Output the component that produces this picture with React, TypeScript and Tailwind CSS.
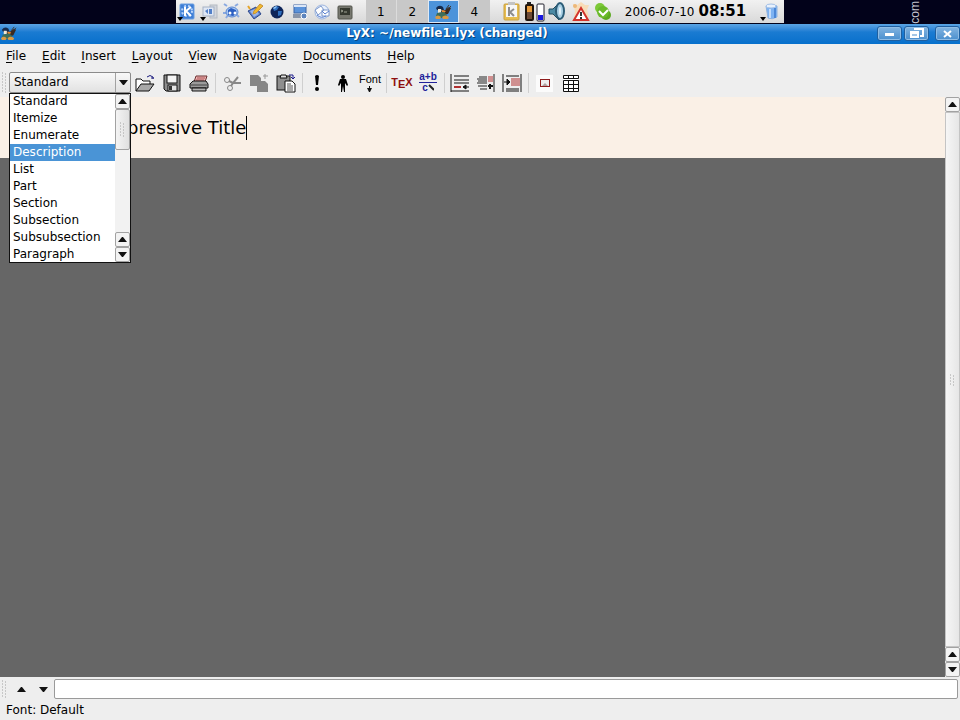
import React from "react";

type Kids = { children: React.ReactNode };

function Icon({ children, w = 20, h = 20 }: Kids & { w?: number; h?: number }) {
  return (
    <svg width={w} height={h} viewBox={`0 0 ${w} ${h}`} fill="none" aria-hidden="true" className="shrink-0">
      {children}
    </svg>
  );
}

const Gear = () => (
  <>
    <path d="M2 2l3 2M16 2l-3 2M1 11l3 0M17 15l-3-3M4 16l2-3" stroke="#8aa9e0" strokeWidth="2" />
    <ellipse cx="10" cy="10" rx="6" ry="5" fill="#a9c8f4" stroke="#5a86d0" />
    <path d="M6 8l3-2 5 2 1 4-4 2-5-1z" fill="#2c5fc2" />
    <circle cx="8" cy="11" r="1.500" fill="#fff" />
    <circle cx="13" cy="11" r="1.500" fill="#fff" />
  </>
);

function Duck({ size = 18 }: { size?: number }) {
  return (
    <svg width={size} height={size} viewBox="0 0 18 18" fill="none" aria-hidden="true">
      <path d="M2 5q3-4 7-1l1 3-3 1-4-1z" fill="#172b4c" />
      <path d="M4 6l3 0 1 3-4 1z" fill="#f2e8d2" />
      <path d="M7 8l4-1 4-3 2 1-3 6-6 1z" fill="#3b2a22" />
      <path d="M12 6l3-4M14 6l3-3" stroke="#3b3630" />
      <path d="M8 7l4 1-2 2-2-1z" fill="#ef8a2c" />
      <path d="M3 10l7-1 3 3-2 3H5l-3-2z" fill="#3d6e5a" />
      <path d="M1 14q3-3 6 0l-1 2H2zM8 14q3-3 7 0l-1 2H9z" fill="#d99a45" />
    </svg>
  );
}

const launchers = [
  {
    name: "K Menu",
    art: (
      <>
        <rect x="3" y="2" width="14" height="15" rx="1" fill="#3f7fd6" stroke="#6d9fe0" />
        <circle cx="10" cy="9" r="5" stroke="#bcd6fa" strokeWidth="2" strokeDasharray="2 2" />
        <path d="M8 5v9M14 5L9 9l5 5" stroke="#fff" strokeWidth="2" />
        <path d="M0 15h6l-3 4z" fill="#000" />
      </>
    ),
  },
  {
    name: "Desktop",
    art: (
      <>
        <rect x="10" y="3" width="7" height="13" fill="#d3d6dc" stroke="#b4b9c2" />
        <rect x="3" y="5" width="11" height="9" fill="#dfe7f4" stroke="#a6b1c4" />
        <path d="M5 9l3-2v5zM9 7h3v5H9z" fill="#527fc8" />
        <path d="M0 15h6l-3 4z" fill="#000" />
      </>
    ),
  },
  { name: "System", art: <Gear /> },
  {
    name: "Editor",
    art: (
      <>
        <path d="M3 9l8-4 5 7-7 5z" fill="#5b7dcc" stroke="#304a8a" />
        <path d="M5 9l5-2 4 5-5 3z" fill="#9ab5e8" />
        <path d="M15 2l3 2-7 7-3 1 1-3z" fill="#f0b92e" stroke="#c8923a" />
        <path d="M3 4l2 3" stroke="#e6a52b" strokeWidth="2" />
      </>
    ),
  },
  {
    name: "Browser",
    art: (
      <>
        <circle cx="10" cy="10" r="6.500" fill="#0d2458" />
        <path d="M6 6q3-3 6-1l-2 3-3 1zM11 9l4 0-1 4-3 1z" fill="#2e6fc0" />
        <path d="M6 6q2-2 4-2l-1 2-2 1z" fill="#8fc4f4" />
      </>
    ),
  },
  {
    name: "Terminal",
    art: (
      <>
        <rect x="4" y="3" width="12" height="8" fill="#5b93da" stroke="#3c65a5" />
        <rect x="4" y="3" width="12" height="2" fill="#dbe6f6" />
        <path d="M3 12h13v4H3z" fill="#8894a8" />
        <circle cx="14" cy="14" r="3" fill="#5d84bd" stroke="#fff" />
      </>
    ),
  },
  {
    name: "Mail",
    art: (
      <>
        <circle cx="10" cy="10" r="7" fill="#e8f0fc" stroke="#9db5de" />
        <path d="M3 8l6-4 3 4-6 5zM10 8h7v6h-7z" fill="#fff" stroke="#7d99cc" />
        <path d="M5 13q4 4 9 1M10 9l3 3 4-3" stroke="#587fd0" strokeWidth="1" />
      </>
    ),
  },
  {
    name: "Console",
    art: (
      <>
        <rect x="3" y="4" width="14" height="13" rx="1" fill="#77786f" stroke="#55564f" />
        <rect x="5" y="6" width="10" height="7" fill="#34382f" />
        <path d="M6 8l2 1-2 1M9 10h3" stroke="#9da193" />
      </>
    ),
  },
];

const tray = [
  {
    name: "Clipboard",
    art: (
      <>
        <rect x="3" y="3" width="15" height="16" rx="1" fill="#e6bd50" stroke="#c9a040" />
        <rect x="5" y="4" width="11" height="12" fill="#f7f7f7" />
        <rect x="7" y="1" width="7" height="3" fill="#c4c4c4" />
        <path d="M8 6v9M13 8l-4 3 4 4" stroke="#8c8c8c" strokeWidth="2" />
      </>
    ),
  },
  {
    name: "Battery",
    art: (
      <>
        <rect x="3" y="1" width="4" height="3" fill="#222" />
        <rect x="1" y="3" width="9" height="17" rx="2" fill="#20150c" />
        <rect x="3" y="5" width="5" height="6" fill="#e89c3c" />
        <rect x="3" y="11" width="5" height="7" fill="#6d4a36" />
        <rect x="13" y="3" width="7" height="17" rx="1" fill="#fff" stroke="#20202c" />
        <rect x="14" y="14" width="5" height="5" fill="#1616e0" />
      </>
    ),
  },
  {
    name: "Volume",
    art: (
      <>
        <path d="M2 8h4l6-6v17l-6-6H2z" fill="#4c8ba5" stroke="#234b5d" />
        <ellipse cx="13" cy="10" rx="4" ry="8" fill="#a9d0e4" stroke="#2d5d77" strokeWidth="2" />
        <ellipse cx="13" cy="10" rx="1" ry="4" fill="#e6f3fa" />
      </>
    ),
  },
  {
    name: "Alarm",
    art: (
      <>
        <path d="M3 3l4 1 4-3 4 3 4 0-2 5 2 7-15 2 1-8z" fill="#f8dcb8" />
        <circle cx="5" cy="5" r="2" fill="#ecb878" />
        <path d="M11 7l7 12H4z" fill="#fff" stroke="#d3342c" strokeWidth="2" />
        <path d="M11 11v4M11 16v2" stroke="#333" strokeWidth="2" />
      </>
    ),
  },
  {
    name: "Messenger",
    art: (
      <>
        <circle cx="7" cy="7" r="5" fill="#7cc838" />
        <circle cx="13" cy="14" r="5" fill="#5ca920" />
        <circle cx="10" cy="11" r="6" fill="#6aba2a" />
        <path d="M6 10l4 4 5-5" stroke="#fff" strokeWidth="2" />
      </>
    ),
  },
];

function TopPanel() {
  return (
    <div className="relative flex h-6 justify-center bg-[#02021a]">
      <div className="flex h-[23px] items-center bg-linear-to-b from-[#f1f1f1] to-[#d9d9d9]">
        <div className="grid w-[180px] grid-cols-8">
          {launchers.map((l) => (
            <button key={l.name} aria-label={l.name} className="flex justify-center">
              <Icon>{l.art}</Icon>
            </button>
          ))}
        </div>
        <div className="ml-2.5 grid h-full w-[124px] grid-cols-4 bg-[#c8c8c8] text-xs">
          <button className="border-r border-[#dcdcdc]">1</button>
          <button>2</button>
          <button aria-label="Desktop 3" className="flex items-center justify-center border border-[#dfe9f4] bg-[#4c93da]">
            <Duck size={18} />
          </button>
          <button>4</button>
        </div>
        <div className="ml-2.5 flex">
          {tray.map((t) => (
            <button key={t.name} aria-label={t.name} className="flex w-[23px] justify-center">
              <Icon w={21} h={21}>{t.art}</Icon>
            </button>
          ))}
        </div>
        <time className="ml-2.5 text-xs">2006-07-10</time>
        <time className="ml-1 text-[15px] font-bold">08:51</time>
        <button aria-label="Trash" className="mr-1 ml-3.5">
          <Icon>
            <path d="M6 4q5-3 11 0v11q-5 3-9 1z" fill="#7db2f2" stroke="#8fb2df" />
            <ellipse cx="11" cy="4" rx="5" ry="2" fill="#e8f1fd" stroke="#a5c1e6" />
            <path d="M10 7v9" stroke="#c4dcfa" strokeWidth="2" />
            <path d="M15 6v10" stroke="#4c87d6" strokeWidth="2" />
            <path d="M0 15h6l-3 4z" fill="#000" />
          </Icon>
        </button>
      </div>
      <div className="absolute right-[37px] bottom-0 rotate-180 font-['Liberation_Sans',sans-serif] text-xs/4 text-[#c4c4ce] [writing-mode:vertical-rl]">
        com
      </div>
    </div>
  );
}

function WindowButton({ label, children }: Kids & { label: string }) {
  return (
    <button
      aria-label={label}
      className="flex h-[15px] w-[25px] items-center justify-center rounded-[3px] border border-[#1f5f9f] bg-linear-to-b from-[#82b4e0] to-[#4a8fce] shadow-[inset_0_0_0_1px_#8fbde6]"
    >
      <Icon w={15} h={11}>{children}</Icon>
    </button>
  );
}

function TitleBar() {
  return (
    <header className="flex h-5 items-center bg-linear-to-b from-[#5ba5e4] via-[#1a7bd2] via-40% to-[#0670cc] pb-0.5 text-white">
      <Duck size={17} />
      <h1 className="flex-1 text-center text-xs font-bold [text-shadow:1px_1px_0_#08467f]">LyX: ~/newfile1.lyx (changed)</h1>
      <div className="flex gap-0.5">
        <WindowButton label="Minimize">
          <path d="M3 5h9v3H3z" fill="#fff" />
        </WindowButton>
        <WindowButton label="Restore">
          <path d="M5 1h9v7h-3" stroke="#fff" strokeWidth="2" />
          <rect x="1" y="3" width="9" height="7" fill="#fff" />
          <path d="M3 7h5" stroke="#4a8fce" />
        </WindowButton>
        <div className="ml-1">
          <WindowButton label="Close">
            <path d="M4 3l7 6M11 3L4 9" stroke="#fff" strokeWidth="2" />
          </WindowButton>
        </div>
      </div>
    </header>
  );
}

const menus = ["File", "Edit", "Insert", "Layout", "View", "Navigate", "Documents", "Help"];

function MenuBar() {
  return (
    <nav className="flex h-6 items-center gap-4 px-1.5">
      {menus.map((m) => (
        <button key={m}>
          <span className="underline underline-offset-2">{m[0]}</span>
          {m.slice(1)}
        </button>
      ))}
    </nav>
  );
}

function Triangle({ down = false }: { down?: boolean }) {
  return (
    <svg width="9" height="5" viewBox="0 0 9 5" aria-hidden="true">
      <path d={down ? "M0 0h9L5 5H4z" : "M4 0h1l4 5H0z"} fill="#111" />
    </svg>
  );
}

function ScrollButton({ down = false }: { down?: boolean }) {
  return (
    <button
      aria-label={down ? "Scroll down" : "Scroll up"}
      className="flex h-[15px] w-full shrink-0 items-center justify-center rounded-[2px] border border-[#a2a2a2] bg-[#f3f3f3]"
    >
      <Triangle down={down} />
    </button>
  );
}

function Grip({ rows = 3 }: { rows?: number }) {
  return (
    <svg width="5" height={rows * 3} viewBox={`0 0 5 ${rows * 3}`} aria-hidden="true">
      {Array.from({ length: rows }, (_, i) => (
        <path key={i} d={`M0 ${i * 3 + 1}h1M3 ${i * 3 + 2}h1`} stroke="#a0a0a0" />
      ))}
    </svg>
  );
}

const styles = ["Standard", "Itemize", "Enumerate", "Description", "List", "Part", "Section", "Subsection", "Subsubsection", "Paragraph"];

function StyleCombo() {
  return (
    <div className="relative w-[122px]">
      <div className="relative">
        <select
          aria-label="Paragraph style"
          className="h-[21px] w-full appearance-none rounded-[2px] border border-[#8b8b8b] bg-linear-to-b from-[#f8f8f8] to-[#e2e2e2] pb-px pl-1"
        >
          <option>Standard</option>
        </select>
        <div className="pointer-events-none absolute inset-y-px right-px flex w-[15px] items-center justify-center border-l border-[#a2a2a2]">
          <Triangle down />
        </div>
      </div>
      <div className="absolute top-[21px] left-0 z-10 flex h-[170px] w-full overflow-hidden border border-[#111] bg-white">
        <ul role="listbox" aria-label="Styles" className="-mt-px flex-1">
          {styles.map((s) => (
            <li
              key={s}
              role="option"
              aria-selected={s === "Description"}
              className={s === "Description" ? "bg-[#4a94d6] pl-[3px] leading-[17px] text-white" : "pl-[3px] leading-[17px]"}
            >
              {s}
            </li>
          ))}
        </ul>
        <div className="flex w-[15px] flex-col bg-[#f2f2f2]">
          <ScrollButton />
          <div className="flex h-[41px] items-center justify-center rounded-[2px] border border-[#a2a2a2] bg-linear-to-r from-[#f4f4f4] to-[#e0e0e0]">
            <Grip rows={5} />
          </div>
          <div className="flex-1" />
          <ScrollButton />
          <ScrollButton down />
        </div>
      </div>
    </div>
  );
}

const wideTools = [
  [
    {
      name: "Open",
      art: (
        <>
          <path d="M1 18V6h5l2 2h7v3" fill="#fff" stroke="#111" />
          <path d="M1 18l5-7h13l-5 7z" fill="#a9a9a9" stroke="#111" />
          <path d="M12 4q3-3 6 0v2M16 5h3" stroke="#1b1b7e" strokeWidth="1" />
        </>
      ),
    },
    {
      name: "Save",
      art: (
        <>
          <path d="M2 2h16v16H4l-2-2z" fill="#8d8d8d" stroke="#111" />
          <rect x="5" y="2" width="10" height="8" fill="#f4f4f4" stroke="#111" />
          <rect x="6" y="12" width="9" height="6" fill="#e4e4e4" stroke="#111" />
          <rect x="7" y="13" width="3" height="4" fill="#333" />
        </>
      ),
    },
    {
      name: "Print",
      art: (
        <>
          <path d="M5 9l2-6h11l-2 6z" fill="#f0b4b4" stroke="#6a3030" />
          <path d="M8 5h8M7 7h8" stroke="#a85555" />
          <path d="M1 11l3-3h13l2 3v4H1z" fill="#9b9b9b" stroke="#111" />
          <path d="M2 12h16" stroke="#444" />
          <path d="M3 15h14v3H3z" fill="#b2b2b2" stroke="#111" />
        </>
      ),
    },
  ],
  [
    {
      name: "Cut",
      art: (
        <>
          <circle cx="5" cy="7" r="2.500" stroke="#888" />
          <circle cx="8" cy="15" r="2.500" stroke="#888" />
          <path d="M7 8l4 2h8M9 13l2-3 5-6" stroke="#888" strokeWidth="2" />
        </>
      ),
    },
    {
      name: "Copy",
      art: (
        <>
          <path d="M1 2h8l3 3v8H1z" fill="#868686" />
          <path d="M8 8h8l3 3v8H8z" fill="#868686" />
          <path d="M16 1v5M14 3h5" stroke="#999" />
        </>
      ),
    },
    {
      name: "Paste",
      art: (
        <>
          <rect x="1" y="3" width="13" height="14" fill="#8e8e8e" stroke="#111" />
          <path d="M4 5l1-3h5l1 3z" fill="#ddd" stroke="#111" />
          <path d="M9 8h7l3 3v8H9z" fill="#fff" stroke="#111" />
          <path d="M11 11h4M11 13h6M11 15h6M11 17h6" stroke="#555" />
          <path d="M13 2h4v4M15 4l2 2 2-2" stroke="#1c1c8c" strokeWidth="1" />
        </>
      ),
    },
  ],
];

const narrowTools = [
  [
    {
      name: "Emphasis",
      art: (
        <>
          <path d="M7 3q2-2 4 0l-1 9H8z" fill="#000" />
          <circle cx="9" cy="16" r="2" fill="#000" />
        </>
      ),
    },
    {
      name: "Noun style",
      art: (
        <>
          <circle cx="9" cy="4" r="2" fill="#000" />
          <path d="M6 6h6l2 6-1 1-2-3v9h-1l-1-6-1 6H7v-9l-2 3-1-1z" fill="#000" />
        </>
      ),
    },
    { name: "Font", art: null },
  ],
  [
    { name: "TeX", art: null },
    { name: "Math", art: null },
  ],
  [
    {
      name: "Footnote",
      art: (
        <>
          <path d="M1 1v18M1 18h18M4 3h15M4 7h15M4 10h15" stroke="#111" strokeWidth="1" />
          <path d="M4 14h7" stroke="#b03030" strokeWidth="2" />
          <path d="M13 14h6M13 14l3-2v4z" stroke="#111" fill="#111" />
        </>
      ),
    },
    {
      name: "Margin note",
      art: (
        <>
          <path d="M3 4h8M1 6h10M2 8h9M1 10h10M2 13h9M4 16h7M18 1v18" stroke="#222" />
          <path d="M12 4h5M12 6h5M12 8h5" stroke="#b03030" />
          <path d="M14 11v5M12 13h5" stroke="#111" strokeWidth="2" />
        </>
      ),
    },
    {
      name: "Indent",
      art: (
        <>
          <path d="M1 1v18M19 1v18M4 3h13M4 16h13M4 18h13" stroke="#111" />
          <path d="M9 6h9M9 8h9M9 10h9M9 12h9" stroke="#b03030" />
          <path d="M2 9h4M5 6l3 3-3 3z" stroke="#111" fill="#111" />
        </>
      ),
    },
  ],
  [
    {
      name: "Graphics",
      art: (
        <>
          <rect x="2" y="2" width="17" height="17" fill="#fbfbfb" />
          <rect x="6.500" y="6.500" width="9" height="7" fill="#eee" stroke="#8e1c1c" />
          <path d="M8 13l3-3 3 3z" fill="#b0a0a0" />
        </>
      ),
    },
    {
      name: "Table",
      art: (
        <>
          <rect x="3" y="2" width="15" height="17" fill="#fff" />
          <path d="M3.500 2.500h15v3h-15zM3.500 7.500h15v11h-15zM8.500 2v4M13.500 2v4M8.500 8v11M13.500 8v11M3 11.500h15M3 15.500h15" stroke="#111" />
        </>
      ),
    },
  ],
];

function Separator() {
  return (
    <div className="flex w-1.5 justify-center">
      <div className="h-5 w-px bg-[#cfcfcf]" />
    </div>
  );
}

function ToolFace({ name, art }: { name: string; art: React.ReactNode }) {
  if (name === "Font")
    return (
      <span className="flex flex-col items-center font-['Liberation_Sans',sans-serif] text-[11px]/[13px]">
        Font
        <svg width="5" height="6" viewBox="0 0 5 6" aria-hidden="true">
          <path d="M2 0h1v2h2L3 6H2L0 2h2z" fill="#111" />
        </svg>
      </span>
    );
  if (name === "TeX")
    return (
      <span className="flex font-['Liberation_Sans',sans-serif] text-[11px]/[16px] font-bold text-[#8e1010]">
        T<span className="pt-0.5">E</span>X
      </span>
    );
  if (name === "Math")
    return (
      <span className="flex flex-col items-center font-['Liberation_Sans',sans-serif] text-[10px]/[10px] font-bold text-[#22229a]">
        <span className="border-b border-[#22229a]">a+b</span>
        <span className="flex">
          c
          <svg width="6" height="8" viewBox="0 0 6 8" aria-hidden="true">
            <path d="M1 2l5 5" stroke="#222" strokeWidth="2" />
          </svg>
        </span>
      </span>
    );
  return <Icon>{art}</Icon>;
}

function Toolbar() {
  return (
    <div className="flex h-[29px] items-center">
      <div className="flex w-[9px] justify-center">
        <Grip rows={7} />
      </div>
      <StyleCombo />
      {wideTools.map((group, i) => (
        <React.Fragment key={i}>
          {group.map((t) => (
            <button key={t.name} aria-label={t.name} className="flex w-[27px] justify-center">
              <ToolFace {...t} />
            </button>
          ))}
          <Separator />
        </React.Fragment>
      ))}
      {narrowTools.map((group, i) => (
        <React.Fragment key={i}>
          {i > 0 && <Separator />}
          {group.map((t) => (
            <button key={t.name} aria-label={t.name} className="flex w-[26px] justify-center">
              <ToolFace {...t} />
            </button>
          ))}
        </React.Fragment>
      ))}
    </div>
  );
}

export default function App() {
  return (
    <div className="flex min-h-screen flex-col bg-[#eeeeee] font-['DejaVu_Sans',sans-serif] text-xs text-black">
      <TopPanel />
      <TitleBar />
      <MenuBar />
      <Toolbar />
      <main className="flex flex-1">
        <div className="flex-1 bg-[#666666]">
          <div className="flex h-[61px] items-center bg-[#faf0e6] pl-[127px]">
            <p className="border-r border-black text-lg/6">pressive Title</p>
          </div>
        </div>
        <div className="flex w-[15px] flex-col bg-[#eeeeee]">
          <ScrollButton />
          <div className="flex flex-1 items-center justify-center border border-[#c4c4c4] bg-linear-to-r from-[#f6f6f6] to-[#e6e6e6]">
            <Grip rows={4} />
          </div>
          <ScrollButton />
          <ScrollButton down />
        </div>
      </main>
      <div className="flex h-6 items-center pr-0.5">
        <div className="flex w-[9px] justify-center">
          <Grip rows={6} />
        </div>
        <button aria-label="Previous command" className="flex w-6 justify-center">
          <Triangle />
        </button>
        <button aria-label="Next command" className="flex w-[21px] justify-center">
          <Triangle down />
        </button>
        <input aria-label="Command" className="h-5 min-w-0 flex-1 rounded-[2px] border border-[#9a9a9a] bg-white px-1" />
      </div>
      <footer className="flex h-[19px] items-center px-1.5 pb-0.5">Font: Default</footer>
    </div>
  );
}
